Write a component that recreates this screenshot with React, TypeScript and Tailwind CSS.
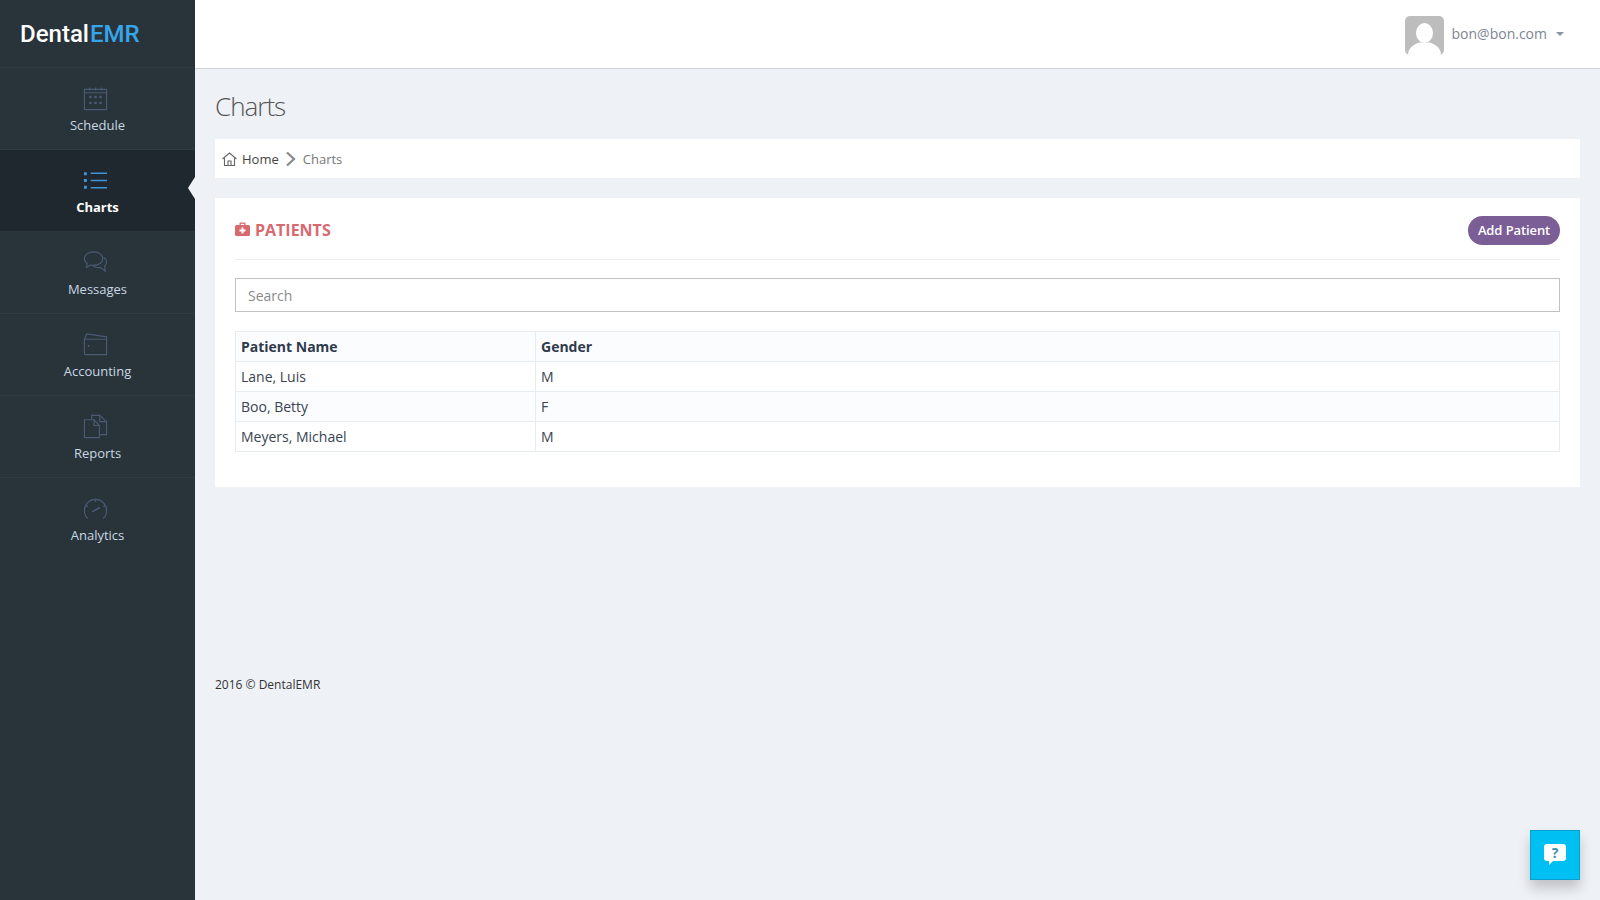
import type { ReactNode } from "react";

const iconProps = {
  width: 25,
  height: 25,
  viewBox: "0 0 26 26",
  fill: "none",
  stroke: "currentColor",
  strokeWidth: 1.2,
};

const ScheduleIcon = () => (
  <svg {...iconProps}>
    <path d="M1.500 3.500h23v21h-23z" />
    <path d="M1.500 7h23M7 1.500v3M13 1.500v3M19 1.500v3" />
    <path d="M6.500 11.500h2.500M11.800 11.500h2.500M17 11.500h2.500M6.500 17.500h2.500M11.800 17.500h2.500M17 17.500h2.500" strokeWidth={2.500} />
  </svg>
);

const ChartsIcon = () => (
  <svg {...iconProps}>
    <path d="M1 6h3M1 13h3M1 20h3" strokeWidth={3} />
    <path d="M8 5.500h17M8 13h17M8 20.500h17" strokeWidth={1.400} />
  </svg>
);

const MessagesIcon = () => (
  <svg {...iconProps}>
    <path d="M11 2c5.500 0 9.500 3 9.500 7s-4 7-9.500 7c-1 0-2-.1-3-.4L3.500 18l1-4C2.500 12.800 1.500 11 1.500 9c0-4 4-7 9.500-7z" />
    <path d="M21.500 7.500c2 1.300 3 3 3 5 0 1.700-.8 3.200-2 4.300l.6 5.200-4.600-3.800c-3 .5-6-.2-8-1.700" />
  </svg>
);

const AccountingIcon = () => (
  <svg {...iconProps}>
    <path d="M2 7.500h22.500v16H2.500A1 1 0 0 1 1.500 22.500v-15z" />
    <path d="M1.500 7.500 4 2l20.500 3v2.500" />
    <path d="M5 14.500h1.500" strokeWidth={2} />
  </svg>
);

const ReportsIcon = () => (
  <svg {...iconProps}>
    <path d="M1.500 6h10l5.500 6v12.500H1.500z" />
    <path d="M11.500 6v6H17" />
    <path d="M9 5.500V1.500h8.500l7 6.500v13.500H17" />
    <path d="M17.500 1.500V8h7" />
  </svg>
);

const AnalyticsIcon = () => (
  <svg {...iconProps}>
    <path d="M5 23.500C2.800 21.500 1.500 18.500 1.500 15c0-6.500 5-11.500 11.500-11.500S24.500 8.500 24.500 15c0 3.500-1.300 6.500-3.500 8.500" />
    <path d="M13 3.500v2.500M3 10l2 1M23 10l-2 1" />
    <path d="M9.500 16.500l8-4.500" strokeWidth={1.600} />
  </svg>
);

function NavItem({ icon, label, active }: { icon: ReactNode; label: string; active?: boolean }) {
  return (
    <a
      className={
        active
          ? "relative flex h-[82px] flex-col items-center border-b border-[#2c3840] bg-[#1f282e] pt-[18px] text-white"
          : "relative flex h-[82px] flex-col items-center border-b border-[#2f3a42] pt-[18px] text-[#c9d8e2] last:border-b-0"
      }
    >
      <span className={active ? "mr-[4px] h-[25px] text-[#3d94d6]" : "mr-[4px] h-[25px] text-[#4a5b72]"}>{icon}</span>
      <span className={active ? "mt-[4px] text-[13px] font-bold leading-[20px]" : "mt-[4px] text-[13px] leading-[20px]"}>
        {label}
      </span>
      {active && (
        <span className="absolute right-0 top-[27px] h-0 w-0 border-y-[11px] border-r-[7px] border-y-transparent border-r-[#eef1f6]" />
      )}
    </a>
  );
}

const rows = [
  { name: "Lane, Luis", gender: "M" },
  { name: "Boo, Betty", gender: "F" },
  { name: "Meyers, Michael", gender: "M" },
];

export default function App() {
  return (
    <div className="flex h-screen overflow-hidden bg-[#eef1f6] font-['Open_Sans',sans-serif] text-[14px] text-[#3a4352]">
      <aside className="w-[195px] shrink-0 bg-[#28333a]">
        <div className="flex h-[68px] items-center border-b border-[#2f3a42] pl-[20px] font-['Roboto',sans-serif] text-[24px] font-medium">
          <span className="text-white">Dental</span>
          <span className="ml-[1px] text-[#36a5ea]">EMR</span>
        </div>
        <NavItem icon={<ScheduleIcon />} label="Schedule" />
        <NavItem icon={<ChartsIcon />} label="Charts" active />
        <NavItem icon={<MessagesIcon />} label="Messages" />
        <NavItem icon={<AccountingIcon />} label="Accounting" />
        <NavItem icon={<ReportsIcon />} label="Reports" />
        <NavItem icon={<AnalyticsIcon />} label="Analytics" />
      </aside>

      <div className="flex min-w-0 flex-1 flex-col">
        <header className="flex h-[69px] shrink-0 items-center justify-end border-b border-[#cfd2d6] bg-white pr-[36px]">
          <div className="mr-[8px] mt-[2px] h-[39px] w-[39px] overflow-hidden rounded-[5px] bg-[#bdbdbd]">
            <svg width="39" height="39" viewBox="0 0 39 39" fill="#fff">
              <ellipse cx="19.500" cy="17" rx="8.500" ry="10" />
              <path d="M3 39c0-7 5-10 11-12.500h11c6 2.500 11 5.500 11 12.500z" />
            </svg>
          </div>
          <span className="mb-[2px] text-[14px] text-[#7d8593]">bon@bon.com</span>
          <span className="ml-[9px] h-0 w-0 border-x-[4px] border-t-[4px] border-x-transparent border-t-[#8a93a1]" />
        </header>

        <main className="px-[20px]">
          <h1 className="pb-[15px] pt-[19px] text-[26px] font-light leading-[36px] tracking-[-1px] text-[#555]">Charts</h1>

          <nav className="flex h-[39px] items-center bg-white pl-[7px] pt-[2px] text-[13px]">
            <svg width="15" height="14" viewBox="0 0 15 14" fill="none" stroke="#666" strokeWidth="1.100" className="mb-[2px]">
              <path d="M.5 7 7.500 1l7 6" />
              <path d="M2.500 6v7.500h10V6" />
              <path d="M6 13.500V9h3v4.500" />
            </svg>
            <span className="ml-[5px] text-[#444]">Home</span>
            <svg width="12" height="16" viewBox="0 0 12 16" fill="none" stroke="#888" strokeWidth="2.200" className="mb-[2px] ml-[6px]">
              <path d="M2 1.500 9 8l-7 6.500" />
            </svg>
            <span className="ml-[6px] text-[#777]">Charts</span>
          </nav>

          <section className="mt-[20px] h-[289px] bg-white px-[20px]">
            <div className="flex h-[62px] items-center justify-between border-b border-[#eceef1] pt-[2px]">
              <h2 className="flex items-center text-[16px] font-bold text-[#d9696f]">
                <svg width="15" height="15" viewBox="0 0 15 15" className="mr-[5px]">
                  <path d="M4.500 3V1.500A1 1 0 0 1 5.500.5h4a1 1 0 0 1 1 1V3h3A1.500 1.500 0 0 1 15 4.500v8a1.500 1.500 0 0 1-1.500 1.500h-12A1.500 1.500 0 0 1 0 12.500v-8A1.500 1.500 0 0 1 1.500 3z" fill="#d9696f" />
                  <path d="M5.800 3V1.800h3.400V3z" fill="#fff" />
                  <path d="M6.500 5.500h2v2h2v2h-2v2h-2v-2h-2v-2h2z" fill="#fff" />
                </svg>
                PATIENTS
              </h2>
              <button className="mt-[2px] h-[29px] w-[92px] rounded-full bg-[#7b5e96] text-[13px] font-semibold tracking-[-0.1px] text-white">Add Patient</button>
            </div>

            <input
              placeholder="Search"
              className="mt-[18px] block h-[34px] w-full border border-[#c2c2c2] bg-white px-[12px] text-[14px] placeholder:text-[#8a8a8a]"
            />

            <table className="mt-[19px] w-full border-collapse border border-[#e7ecf1] text-left text-[14px]">
              <thead>
                <tr className="h-[30px] bg-[#fbfcfd]">
                  <th className="w-[300px] border border-[#e7ecf1] px-[5px] py-0 font-bold text-[#2f3a4c]">Patient Name</th>
                  <th className="border border-[#e7ecf1] px-[5px] py-0 font-bold text-[#2f3a4c]">Gender</th>
                </tr>
              </thead>
              <tbody>
                {rows.map((row, i) => (
                  <tr key={row.name} className={i === 1 ? "h-[30px] bg-[#fbfcfd]" : "h-[30px]"}>
                    <td className="border border-[#e7ecf1] px-[5px] py-0">{row.name}</td>
                    <td className="border border-[#e7ecf1] px-[5px] py-0">{row.gender}</td>
                  </tr>
                ))}
              </tbody>
            </table>
          </section>

          <footer className="mt-[188px] text-[12px] leading-[20px] text-[#333]">2016 © DentalEMR</footer>
        </main>
      </div>

      <button className="absolute bottom-[20px] right-[20px] flex h-[50px] w-[50px] items-center justify-center border border-[#0a9fcc] bg-[#00bff3] shadow-[0_8px_12px_rgba(0,0,0,0.2)]">
        <svg width="22" height="22" viewBox="0 0 22 22">
          <path d="M3 0h16a3 3 0 0 1 3 3v11a3 3 0 0 1-3 3H9l-4 4v-4H3a3 3 0 0 1-3-3V3a3 3 0 0 1 3-3z" fill="#fff" />
          <text x="11" y="13.500" textAnchor="middle" fontSize="14" fontWeight="700" fill="#3a8fb5" fontFamily="Open Sans">?</text>
        </svg>
      </button>
    </div>
  );
}
